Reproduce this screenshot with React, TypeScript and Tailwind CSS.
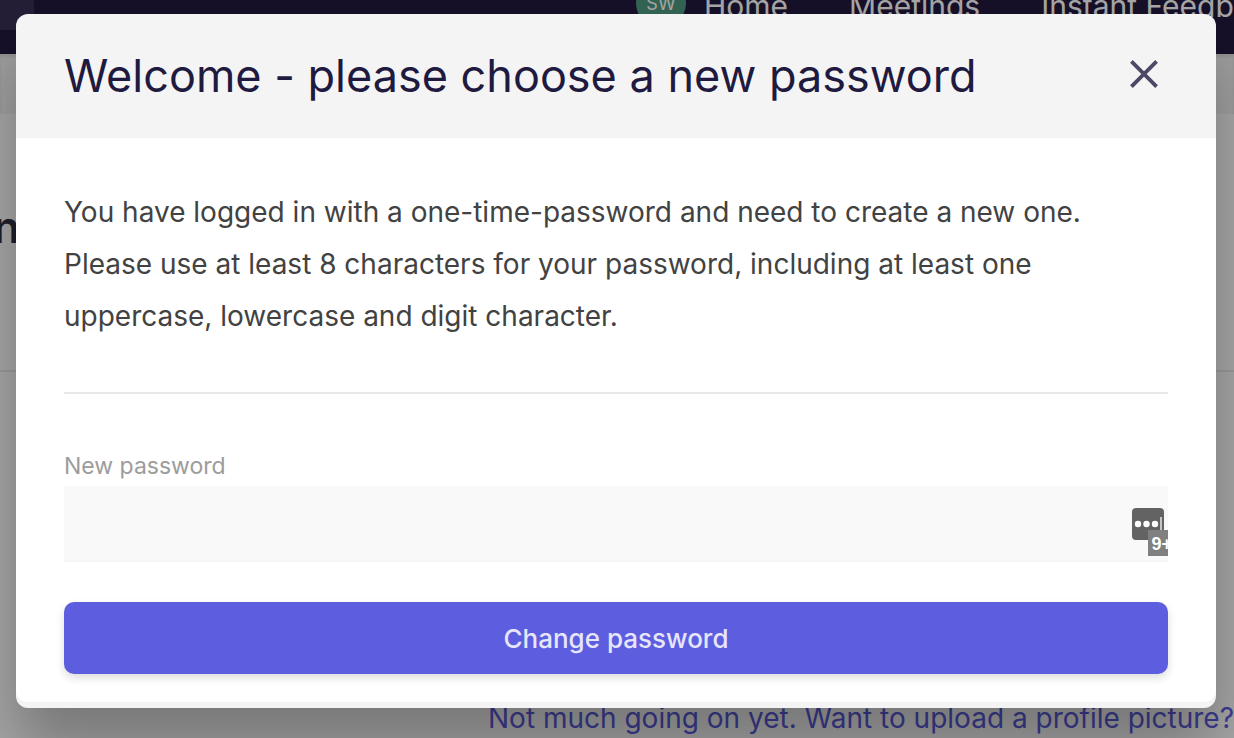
import { ReactNode } from "react";

const navItems = ["Home", "Meetings", "Instant Feedback"];

const NavBar = () => (
  <header className="flex h-[54px] items-start overflow-hidden bg-[#221a40]">
    <div className="h-[30px] w-[34px] shrink-0 rounded-br-lg bg-white/10"></div>
    <div className="-mt-[22px] ml-[602px] grid h-[50px] w-[50px] shrink-0 place-items-end justify-center rounded-full bg-[#4f9a80] pb-3 text-lg leading-6 text-white">
      SW
    </div>
    <nav className="-mt-[9px] ml-[18px] flex shrink-0 gap-[61px]">
      {navItems.map((item) => (
        <a
          key={item}
          href="#"
          className="text-[30px] leading-[30px] whitespace-nowrap text-white"
        >
          {item}
        </a>
      ))}
    </nav>
  </header>
);

const Page = () => (
  <div className="flex h-screen flex-col overflow-hidden bg-white">
    <NavBar />
    <div className="h-[60px] shrink-0 bg-[#f4f4f4] shadow-[inset_0_3px_3px_rgba(0,0,0,0.08)]"></div>
    <div className="h-[258px] shrink-0 border-b-2 border-[#eaeaea] pt-[87px]">
      <h2 className="flex w-5 justify-end overflow-hidden text-[44px] leading-[52px] font-semibold text-[#2e3142]">
        n
      </h2>
    </div>
    <div className="mt-auto flex justify-end pb-1">
      <a
        href="#"
        className="text-[28px] leading-8 whitespace-nowrap text-[#5c5ce0]"
      >
        Not much going on yet. Want to upload a profile picture?
      </a>
    </div>
  </div>
);

const CloseIcon = () => (
  <svg
    viewBox="0 0 28 28"
    className="h-7 w-7"
    fill="none"
    stroke="currentColor"
    strokeWidth="3.8"
    aria-hidden="true"
  >
    <path d="M1.4 1.4 26.6 26.6M26.6 1.4 1.4 26.6" />
  </svg>
);

const PasswordManagerBadge = () => (
  <svg
    viewBox="0 0 36 48"
    className="pointer-events-none absolute top-[22px] right-0 h-12 w-9"
    aria-hidden="true"
  >
    <rect width="32" height="32" rx="4" fill="#636363" />
    <circle cx="6" cy="16" r="3.2" fill="#fff" />
    <circle cx="14.5" cy="16" r="3.2" fill="#fff" />
    <circle cx="23" cy="16" r="3.2" fill="#fff" />
    <rect x="28" y="9" width="2" height="14" fill="#c4c4c4" />
    <rect x="16" y="22" width="20" height="26" fill="#808080" />
    <text
      x="19.5"
      y="42"
      fill="#fff"
      fontSize="18"
      fontWeight="700"
      fontFamily="Liberation Sans, sans-serif"
    >
      9+
    </text>
  </svg>
);

interface IModalProps {
  title: string;
  children: ReactNode;
}

const Modal = (props: IModalProps) => {
  const { title, children } = props;
  return (
    <div
      role="dialog"
      aria-labelledby="modal-title"
      className="mr-[18px] ml-4 mt-[14px] flex-1 self-start overflow-hidden rounded-xl bg-[#f4f4f4] pb-[6px] shadow-[0_40px_60px_rgba(0,0,0,0.28)]"
    >
      <div className="flex h-[124px] items-start justify-between pt-[34px] pr-[58px] pl-12">
        <h1
          id="modal-title"
          className="text-[45px] leading-[56px] text-[#1f1a40]"
        >
          {title}
        </h1>
        <button
          type="button"
          aria-label="Close"
          className="mt-3 text-[#4c4866]"
        >
          <CloseIcon />
        </button>
      </div>
      <div className="rounded-b-xl bg-white px-12 pt-12 pb-7">{children}</div>
    </div>
  );
};

export default function App() {
  return (
    <div className="relative font-['Inter','Liberation_Sans',sans-serif]">
      <Page />
      <div className="absolute inset-0 flex overflow-hidden bg-black/35">
        <Modal title="Welcome - please choose a new password">
          <p className="text-[28px] leading-[52px] text-[#424242]">
            You have logged in with a one-time-password and need to create a new
            one. Please use at least 8 characters for your password, including
            at least one uppercase, lowercase and digit character.
          </p>
          <hr className="mt-[50px] border-t-2 border-[#e8e8e8]" />
          <form className="mt-14" onSubmit={(e) => e.preventDefault()}>
            <label
              htmlFor="new-password"
              className="block text-[23px] leading-8 text-[#9c9c9c]"
            >
              New password
            </label>
            <div className="relative mt-1">
              <input
                id="new-password"
                type="password"
                className="block h-[76px] w-full border-b-2 border-[#f5f5f5] bg-[#f9f9f9] pr-12 pl-4 text-[28px] outline-none"
              />
              <PasswordManagerBadge />
            </div>
            <button
              type="submit"
              className="mt-10 block h-[72px] w-full rounded-[10px] bg-[#5d5ddf] text-[26px] font-medium text-[#e6e5fa] shadow-[0_4px_8px_rgba(0,0,0,0.14)]"
            >
              Change password
            </button>
          </form>
        </Modal>
      </div>
    </div>
  );
}
